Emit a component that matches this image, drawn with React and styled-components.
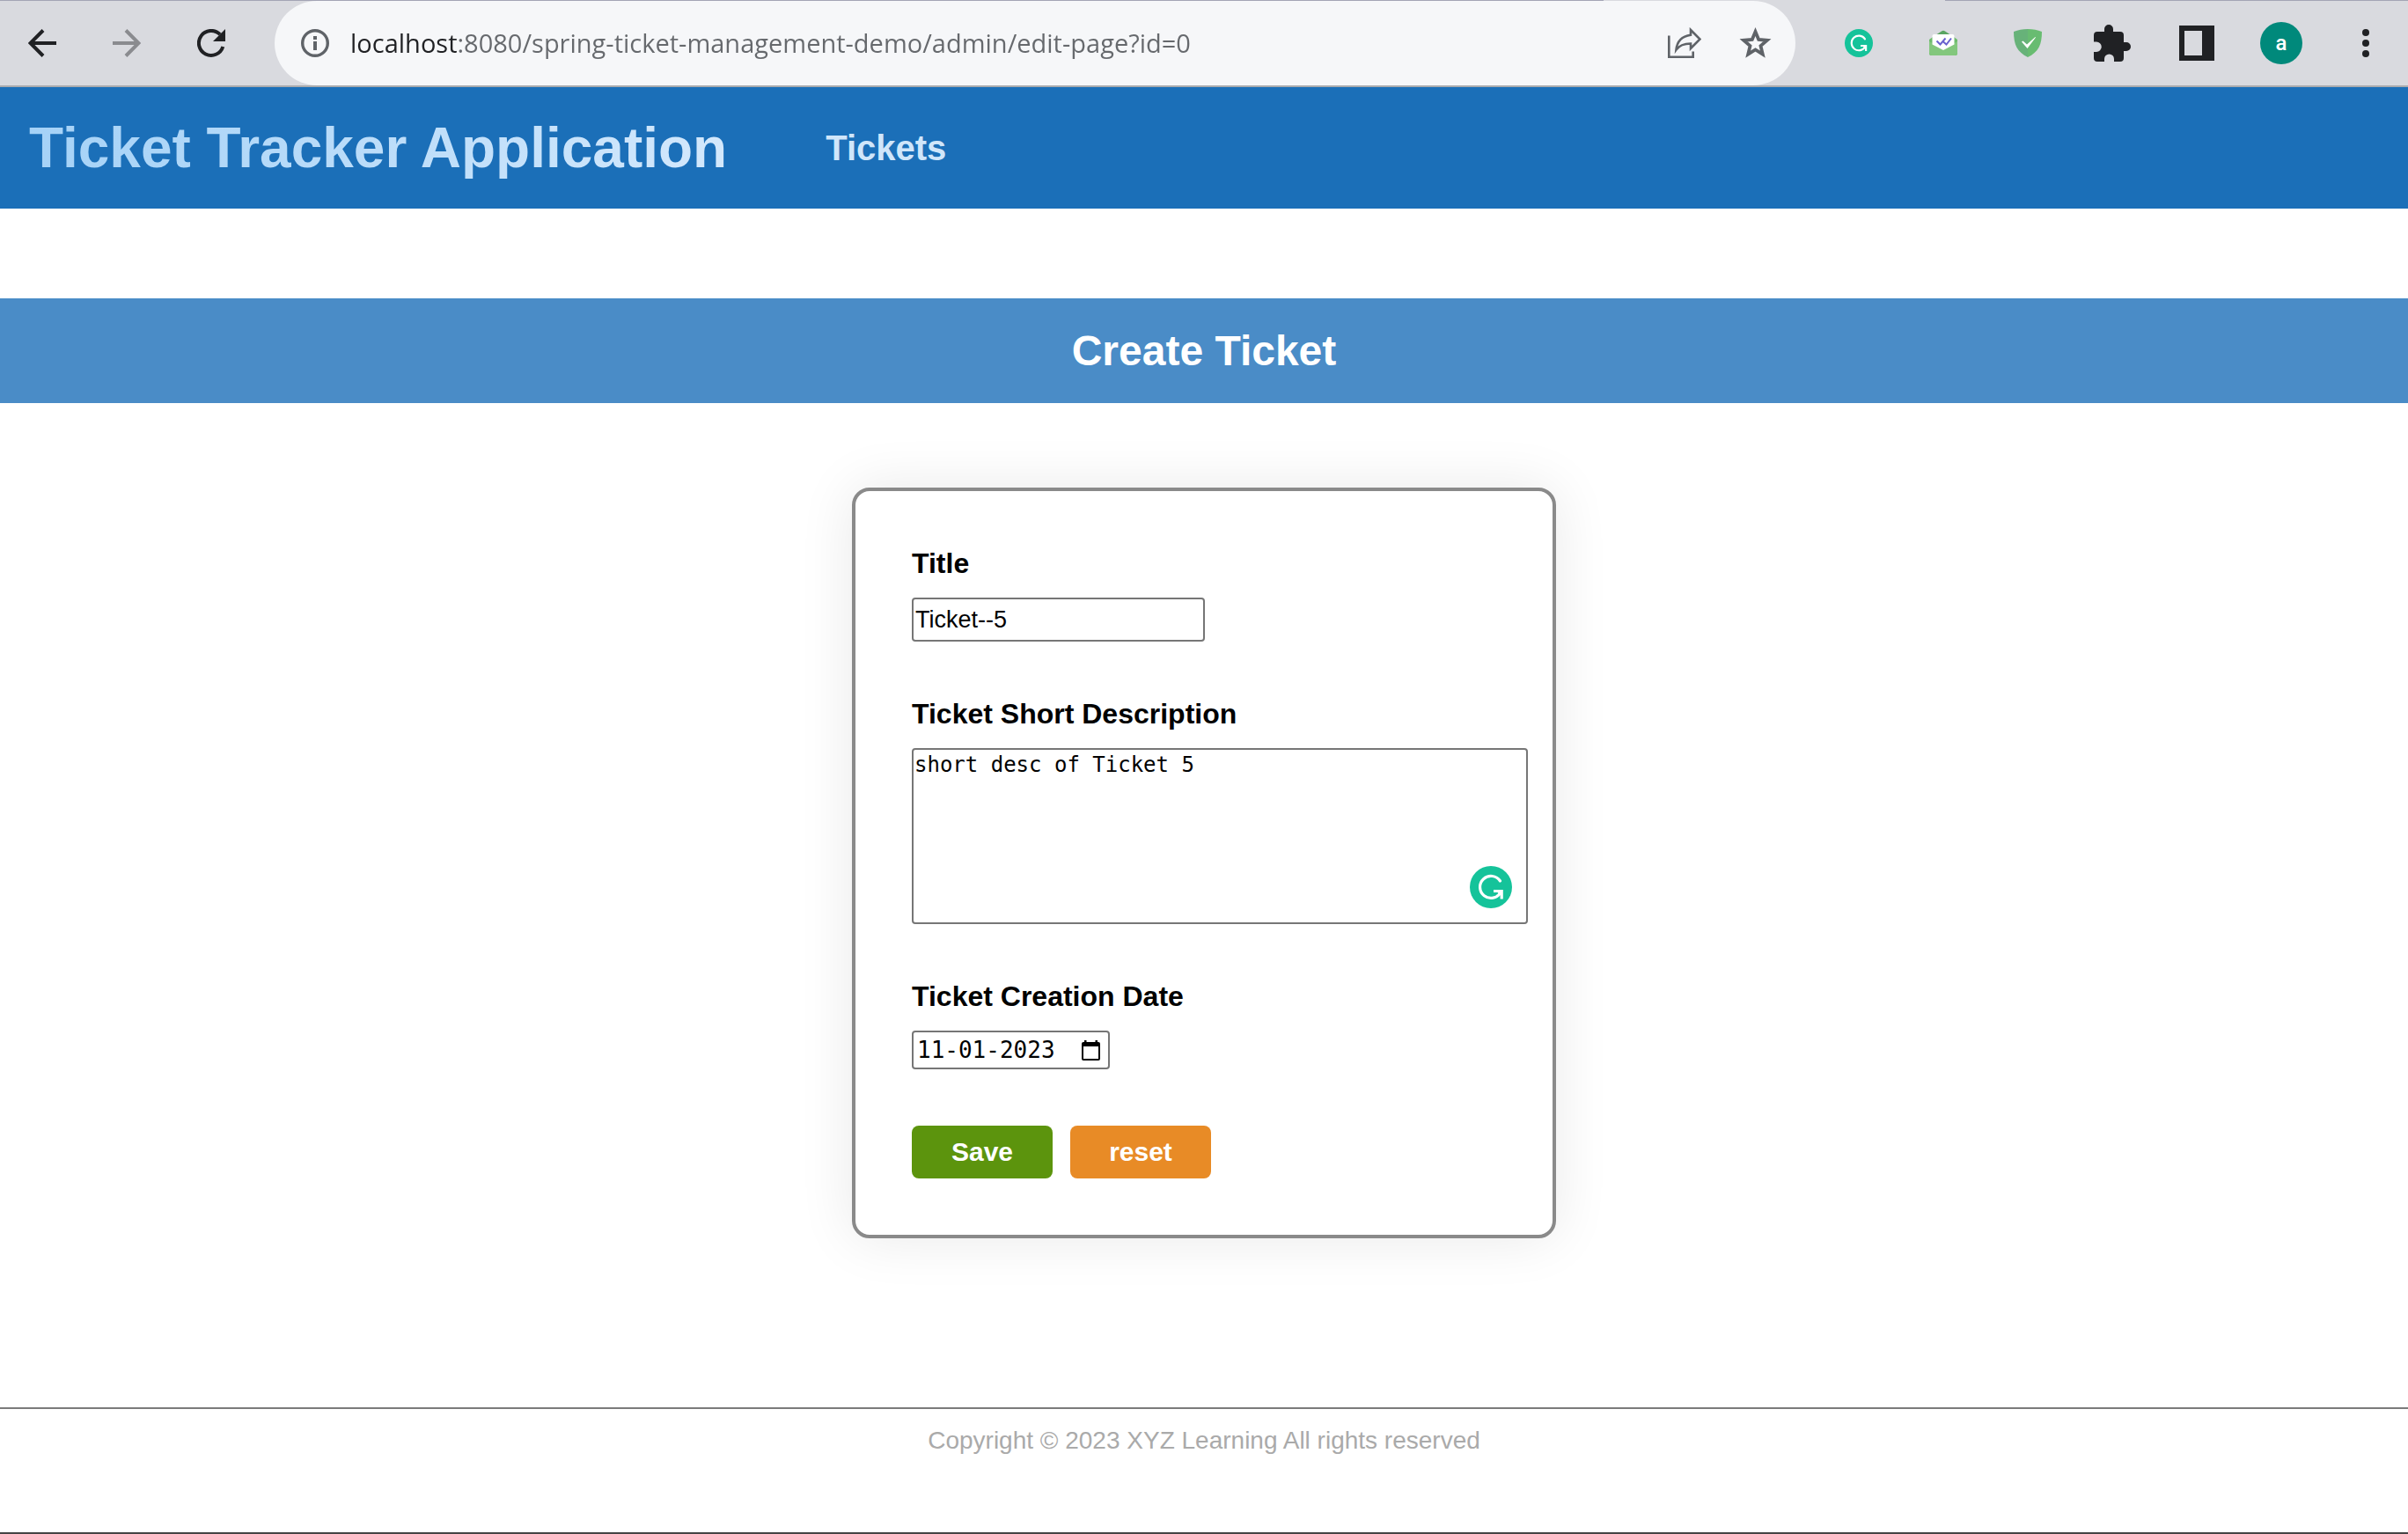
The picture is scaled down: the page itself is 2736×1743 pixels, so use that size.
import React, { useState } from "react";
import styled, { createGlobalStyle } from "styled-components";

const GlobalStyle = createGlobalStyle`
  *, *::before, *::after { box-sizing: border-box; }
  body {
    margin: 0;
    background: #fff;
    color: #000;
    font-family: Arial, "Liberation Sans", sans-serif;
  }
`;

const Page = styled.div`
  min-height: 100vh;
  display: flex;
  flex-direction: column;
  border-bottom: 2px solid #444;
`;

/* Browser chrome */
const TabEdge = styled.div`
  display: grid;
  grid-template-columns: 1822fr 388fr 526fr;
  height: 1px;
  background: #d9dadf;
`;

const TabEdgeInactive = styled.span`
  background: #a3a4b5;
  grid-column: ${(p) => p.$column};
`;

const BrowserBar = styled.div`
  display: flex;
  align-items: stretch;
  height: 98px;
  background: #d9dadf;
  border-bottom: 2px solid #a9abae;
`;

const BarGroup = styled.div`
  display: flex;
`;

const BarButton = styled.button`
  display: flex;
  align-items: center;
  justify-content: center;
  width: ${(p) => (p.$compact ? 80 : 96)}px;
  padding: 0;
  border: 0;
  background: none;
  color: ${(p) => p.$color || "#202124"};
  flex: none;

  svg { display: block; }
`;

const AddressBar = styled.div`
  flex: 1;
  display: flex;
  align-items: center;
  margin: 0 24px;
  padding: 0 6px 0 30px;
  border-radius: 48px;
  background: #f6f7f9;

  > svg { flex: none; }
`;

const AddressInput = styled.input`
  flex: 1;
  min-width: 0;
  height: 48px;
  margin-left: 24px;
  padding: 0 0 2px;
  border: 0;
  outline: none;
  font: 29px "Open Sans", "Noto Sans", sans-serif;
  background: linear-gradient(90deg, #202124 122px, #66696d 122px);
  background-clip: text;
  -webkit-background-clip: text;
  color: transparent;
`;

const Avatar = styled.span`
  display: flex;
  align-items: center;
  justify-content: center;
  width: 48px;
  height: 48px;
  border-radius: 50%;
  background: #00897b;
  color: #fff;
  font: 500 24px/28px Roboto, sans-serif;
`;

/* Application */
const AppHeader = styled.header`
  display: flex;
  align-items: center;
  gap: 112px;
  height: 138px;
  padding: 0 33px;
  background: #1b6fb8;
`;

const Brand = styled.h1`
  margin: 0;
  font-size: 64px;
  line-height: 74px;
  background: linear-gradient(90deg, #a5d2f7, #d3e8fc);
  background-clip: text;
  -webkit-background-clip: text;
  color: transparent;
`;

const NavLink = styled.a`
  color: #d0e6fa;
  font-size: 40px;
  line-height: 46px;
  font-weight: 700;
  text-decoration: none;
`;

const Banner = styled.h2`
  margin: 102px 0 96px;
  padding: 32px;
  background: #4a8cc7;
  color: #fff;
  font-size: 48px;
  line-height: 55px;
  text-align: center;
`;

const Card = styled.form`
  display: flex;
  flex-direction: column;
  gap: 64px;
  width: 800px;
  margin: 0 auto;
  padding: 64px 28px 64px 64px;
  border: 4px solid #8a8a8a;
  border-radius: 20px;
  box-shadow: 0 0 64px rgba(0, 0, 0, 0.09);
`;

const Field = styled.div`
  display: flex;
  flex-direction: column;
  align-items: flex-start;
  gap: 20px;
`;

const Label = styled.label`
  font-size: 32px;
  line-height: 37px;
  font-weight: 700;
`;

const TextInput = styled.input`
  width: 333px;
  height: 50px;
  padding: 0 2px;
  border: 2px solid #767676;
  border-radius: 4px;
  background: #fff;
  color: #000;
  font: 27px Arial, "Liberation Sans", sans-serif;
`;

const NoteBox = styled.div`
  position: relative;
  align-self: stretch;
  display: flex;
`;

const Note = styled.textarea`
  width: 100%;
  height: 200px;
  padding: 1px;
  border: 2px solid #767676;
  border-radius: 4px;
  background: #fff;
  color: #000;
  font: 24px/32px "DejaVu Sans Mono", monospace;
  resize: none;
`;

const AssistantBadge = styled.button`
  position: absolute;
  right: 18px;
  bottom: 18px;
  padding: 0;
  border: 0;
  background: none;

  svg { display: block; }
`;

const DateBox = styled.div`
  display: flex;
  align-items: center;
  justify-content: space-between;
  width: 225px;
  height: 44px;
  padding: 0 9px 0 4px;
  border: 2px solid #767676;
  border-radius: 4px;
  background: #fff;
`;

const DateInput = styled.input`
  width: 164px;
  padding: 0;
  border: 0;
  outline: none;
  background: none;
  color: #000;
  font: 26px/30px "DejaVu Sans Mono", monospace;
`;

const PickerButton = styled.button`
  padding: 0;
  border: 0;
  background: none;

  svg { display: block; }
`;

const Actions = styled.div`
  display: flex;
  gap: 20px;
`;

const ActionButton = styled.button`
  width: 160px;
  height: 60px;
  padding: 0;
  border: 0;
  border-radius: 8px;
  background: ${(p) => p.$fill};
  color: #fff;
  font: 700 30px/34px Arial, "Liberation Sans", sans-serif;
`;

const Footer = styled.footer`
  margin-top: 192px;
  padding: 20px 0 88px;
  border-top: 2px solid #7b7b7b;
  color: #aaa;
  font-size: 28px;
  line-height: 32px;
  text-align: center;
`;

/* Icons */
const ArrowIcon = ({ forward }) => (
  <svg width="32" height="32" viewBox="0 0 32 32" fill="none" stroke="currentColor" strokeWidth="4">
    {forward ? <path d="M0 16h29M15 1.500l14.500 14.500L15 30.500" /> : <path d="M32 16H3M17 1.500L2.500 16 17 30.500" />}
  </svg>
);

const ReloadIcon = () => (
  <svg width="32" height="32" viewBox="0 0 32 32">
    <path d="M29.300 20A14 14 0 1 1 26 6.200" fill="none" stroke="currentColor" strokeWidth="4" />
    <path d="M32 0v14H18z" fill="currentColor" />
  </svg>
);

const InfoIcon = () => (
  <svg width="32" height="32" viewBox="0 0 32 32" fill="#5f6368">
    <circle cx="16" cy="16" r="14.300" fill="none" stroke="#5f6368" strokeWidth="3.400" />
    <path d="M14 8h4v4h-4zM14 14h4v10h-4z" />
  </svg>
);

const ShareIcon = () => (
  <svg width="38" height="36" viewBox="0 0 38 36" fill="none" stroke="#5f6368" strokeWidth="2.600">
    <path d="M1.300 9.500v24.200h27.400v-6.200" />
    <path d="M26 3l10.500 10.500L26 24v-5.500c-7 0-12.500 1.500-16.500 7C10.500 16 16.500 10 26 8.700z" />
  </svg>
);

const StarIcon = () => (
  <svg width="37" height="36" viewBox="0 0 37 36">
    <path
      d="M18.500 5l3.700 9 9.600.8-7.300 6.300 2.300 9.500-8.300-5.100-8.300 5.100 2.300-9.500L5.200 14.800l9.600-.8z"
      fill="none"
      stroke="#5f6368"
      strokeWidth="3.800"
    />
  </svg>
);

const AssistantIcon = ({ size }) => (
  <svg width={size} height={size} viewBox="0 0 48 48">
    <circle cx="24" cy="24" r="24" fill="#15c39a" />
    <path d="M34.500 17A12.500 12.500 0 1 0 35 30" fill="none" stroke="#fff" strokeWidth="3.200" strokeLinecap="round" />
    <path d="M27 28.500h9.200v9" fill="none" stroke="#fff" strokeWidth="3.200" />
    <path d="M36 28.500v6l-6-6z" fill="#fff" />
  </svg>
);

const MailIcon = () => (
  <svg width="32" height="32" viewBox="0 0 32 32">
    <path d="M4 9l10-6.500q2-1.500 4 0L28 9v6H4z" fill="#5aa562" />
    <path d="M0 12l4-3h24l4 3v16q0 2-3 2H3q-3 0-3-2z" fill="#6dbb6c" />
    <path d="M0 14l16 9 16-9v13q0 3-3 3H3q-3 0-3-3z" fill="#83c77d" />
    <path d="M3.500 8q0-2 2-2h21q2 0 2 2v9.500L16 24 3.500 17.500z" fill="#fff" />
    <path d="M8.500 13.500l4 4 6-7M15.500 14l4 3.500 5.500-7" fill="none" stroke="#6a62cf" strokeWidth="2" />
  </svg>
);

const ShieldIcon = () => (
  <svg width="32" height="32" viewBox="0 0 32 32">
    <path d="M16 0C10 0 5 1 0 3c0 15 4 23 16 29z" fill="#67b279" />
    <path d="M16 0c6 0 11 1 16 3 0 15-4 23-16 29z" fill="#68bc71" />
    <path d="M9 14.500l1.500-1L15 17.500 24.500 9l.5.500L15.500 22z" fill="#fff" />
  </svg>
);

const PuzzleIcon = () => (
  <svg width="42" height="42" viewBox="0 0 42 42" fill="currentColor">
    <path d="M4 8h8V5a5 5 0 0 1 10 0v3h8a4 4 0 0 1 4 4v8h3a5 5 0 0 1 0 10h-3v8a4 4 0 0 1-4 4h-7v-3a5.500 5.500 0 0 0-11 0v3H4a4 4 0 0 1-4-4v-7h3a5.500 5.500 0 0 0 0-11.500H0V12a4 4 0 0 1 4-4z" />
  </svg>
);

const PanelIcon = () => (
  <svg width="40" height="40" viewBox="0 0 40 40">
    <path d="M0 0h40v40H0zM6 6v28h20V6z" fill="currentColor" fillRule="evenodd" />
  </svg>
);

const DotsIcon = () => (
  <svg width="8" height="32" viewBox="0 0 8 32" fill="currentColor">
    <circle cx="4" cy="4" r="4" />
    <circle cx="4" cy="16" r="4" />
    <circle cx="4" cy="28" r="4" />
  </svg>
);

const CalendarIcon = () => (
  <svg width="21" height="23" viewBox="0 0 21 23">
    <path
      d="M3 0h2.500v2h10V0H18v2h1a2 2 0 0 1 2 2v17a2 2 0 0 1-2 2H2a2 2 0 0 1-2-2V4a2 2 0 0 1 2-2h1zM2 7v14h17V7z"
      fill="#000"
      fillRule="evenodd"
    />
  </svg>
);

export default function App() {
  const [url, setUrl] = useState("localhost:8080/spring-ticket-management-demo/admin/edit-page?id=0");

  return (
    <>
      <GlobalStyle />
      <Page>
        <TabEdge>
          <TabEdgeInactive $column="1" />
          <TabEdgeInactive $column="3" />
        </TabEdge>
        <BrowserBar>
          <BarGroup>
            <BarButton aria-label="Back"><ArrowIcon /></BarButton>
            <BarButton aria-label="Forward" $color="#8a8b8f"><ArrowIcon forward /></BarButton>
            <BarButton aria-label="Reload"><ReloadIcon /></BarButton>
          </BarGroup>
          <AddressBar>
            <InfoIcon />
            <AddressInput
              aria-label="Address"
              spellCheck={false}
              value={url}
              onChange={(e) => setUrl(e.target.value)}
            />
            <BarButton aria-label="Share" $compact><ShareIcon /></BarButton>
            <BarButton aria-label="Bookmark" $compact><StarIcon /></BarButton>
          </AddressBar>
          <BarGroup>
            <BarButton aria-label="Writing assistant"><AssistantIcon size={32} /></BarButton>
            <BarButton aria-label="Mail tracker"><MailIcon /></BarButton>
            <BarButton aria-label="Ad blocker"><ShieldIcon /></BarButton>
            <BarButton aria-label="Extensions"><PuzzleIcon /></BarButton>
            <BarButton aria-label="Side panel"><PanelIcon /></BarButton>
            <BarButton aria-label="Profile"><Avatar>a</Avatar></BarButton>
            <BarButton aria-label="Menu"><DotsIcon /></BarButton>
          </BarGroup>
        </BrowserBar>

        <AppHeader>
          <Brand>Ticket Tracker Application</Brand>
          <nav>
            <NavLink href="#tickets">Tickets</NavLink>
          </nav>
        </AppHeader>

        <main>
          <Banner>Create Ticket</Banner>
          <Card onSubmit={(e) => e.preventDefault()}>
            <Field>
              <Label htmlFor="title">Title</Label>
              <TextInput id="title" type="text" defaultValue="Ticket--5" />
            </Field>
            <Field>
              <Label htmlFor="description">Ticket Short Description</Label>
              <NoteBox>
                <Note id="description" spellCheck={false} defaultValue="short desc of Ticket 5" />
                <AssistantBadge type="button" aria-label="Check writing">
                  <AssistantIcon size={48} />
                </AssistantBadge>
              </NoteBox>
            </Field>
            <Field>
              <Label htmlFor="created">Ticket Creation Date</Label>
              <DateBox>
                <DateInput id="created" type="text" inputMode="numeric" defaultValue="11-01-2023" />
                <PickerButton type="button" aria-label="Pick a date">
                  <CalendarIcon />
                </PickerButton>
              </DateBox>
            </Field>
            <Actions>
              <ActionButton type="submit" $fill="#5c940d">Save</ActionButton>
              <ActionButton type="reset" $fill="#e88b26">reset</ActionButton>
            </Actions>
          </Card>
        </main>

        <Footer>Copyright © 2023 XYZ Learning All rights reserved</Footer>
      </Page>
    </>
  );
}
